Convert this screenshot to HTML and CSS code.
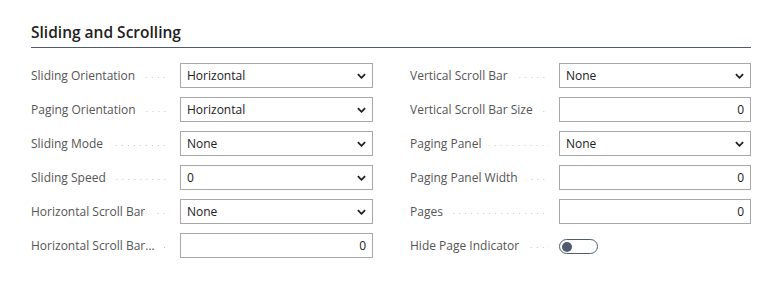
FILE: index.html
```html
<!DOCTYPE html>
<html>
<head>
    <title>Sliding and Scrolling</title>
    <link rel="stylesheet" href="styles.css">
</head>
<body>
    <div class="section">
        <h2 class="section-title">Sliding and Scrolling</h2>
        <div class="fields">
            <div class="column">
                <div class="row">
                    <div class="label"><span>Sliding Orientation</span><i class="leader"></i></div>
                    <div class="field select"><span>Horizontal</span><svg viewBox="0 0 10 6"><path d="M1 1l4 4 4-4"/></svg></div>
                </div>
                <div class="row">
                    <div class="label"><span>Paging Orientation</span><i class="leader"></i></div>
                    <div class="field select"><span>Horizontal</span><svg viewBox="0 0 10 6"><path d="M1 1l4 4 4-4"/></svg></div>
                </div>
                <div class="row">
                    <div class="label"><span>Sliding Mode</span><i class="leader"></i></div>
                    <div class="field select"><span>None</span><svg viewBox="0 0 10 6"><path d="M1 1l4 4 4-4"/></svg></div>
                </div>
                <div class="row">
                    <div class="label"><span>Sliding Speed</span><i class="leader"></i></div>
                    <div class="field select"><span>0</span><svg viewBox="0 0 10 6"><path d="M1 1l4 4 4-4"/></svg></div>
                </div>
                <div class="row">
                    <div class="label"><span>Horizontal Scroll Bar</span><i class="leader"></i></div>
                    <div class="field select"><span>None</span><svg viewBox="0 0 10 6"><path d="M1 1l4 4 4-4"/></svg></div>
                </div>
                <div class="row">
                    <div class="label"><span>Horizontal Scroll Bar Size</span><i class="leader"></i></div>
                    <div class="field number"><span>0</span></div>
                </div>
            </div>
            <div class="column">
                <div class="row">
                    <div class="label"><span>Vertical Scroll Bar</span><i class="leader"></i></div>
                    <div class="field select"><span>None</span><svg viewBox="0 0 10 6"><path d="M1 1l4 4 4-4"/></svg></div>
                </div>
                <div class="row">
                    <div class="label"><span>Vertical Scroll Bar Size</span><i class="leader"></i></div>
                    <div class="field number"><span>0</span></div>
                </div>
                <div class="row">
                    <div class="label"><span>Paging Panel</span><i class="leader"></i></div>
                    <div class="field select"><span>None</span><svg viewBox="0 0 10 6"><path d="M1 1l4 4 4-4"/></svg></div>
                </div>
                <div class="row">
                    <div class="label"><span>Paging Panel Width</span><i class="leader"></i></div>
                    <div class="field number"><span>0</span></div>
                </div>
                <div class="row">
                    <div class="label"><span>Pages</span><i class="leader"></i></div>
                    <div class="field number"><span>0</span></div>
                </div>
                <div class="row">
                    <div class="label"><span>Hide Page Indicator</span><i class="leader"></i></div>
                    <div class="toggle"><i class="knob"></i></div>
                </div>
            </div>
        </div>
    </div>
</body>
</html>
```
FILE: styles.css
```css
body {
    margin: 0;
    padding: 0;
    background-color: #fff;
    font-family: "Open Sans", "Noto Sans", sans-serif;
    color: #212121;
}

.section {
    width: 720px;
    padding: 22px 0 0 31px;
}

.section-title {
    margin: 0;
    font-size: 15.5px;
    font-weight: 600;
    line-height: 20px;
    padding-bottom: 5px;
    border-bottom: 1px solid #505c6d;
}

.fields {
    display: grid;
    grid-template-columns: 342px 341px;
    column-gap: 37px;
    padding-top: 15px;
}

.column {
    display: flex;
    flex-direction: column;
    gap: 9px;
}

.row {
    display: flex;
    align-items: center;
    height: 25px;
}

.label {
    display: flex;
    align-items: center;
    width: 139px;
    margin-right: 10px;
    font-size: 12px;
    color: #555;
}

.label span {
    white-space: nowrap;
    overflow: hidden;
    text-overflow: ellipsis;
    flex: 0 1 auto;
}

.leader {
    flex: 1 0 6px;
    height: 1px;
    margin: 4px 0 0 8px;
    background-image: linear-gradient(to right, #c8c8c8 1px, transparent 1px);
    background-size: 6px 1px;
    background-position: right bottom;
    background-repeat: repeat-x;
}

.field {
    flex: 1;
    box-sizing: border-box;
    height: 25px;
    border: 1px solid #a8a8a8;
    display: flex;
    align-items: center;
    padding: 0 6px 0 6px;
    font-size: 12px;
    color: #212121;
}

.field span {
    flex: 1;
}

.field.number span {
    text-align: right;
}

.field svg {
    width: 9px;
    height: 6px;
    fill: none;
    stroke: #212121;
    stroke-width: 2;
}

.toggle {
    box-sizing: border-box;
    width: 39px;
    height: 15px;
    margin-top: 2px;
    border: 1px solid #505c6d;
    border-radius: 8px;
    display: flex;
    align-items: center;
    padding-left: 2px;
}

.knob {
    width: 10px;
    height: 10px;
    border-radius: 50%;
    background-color: #505c6d;
}
```
